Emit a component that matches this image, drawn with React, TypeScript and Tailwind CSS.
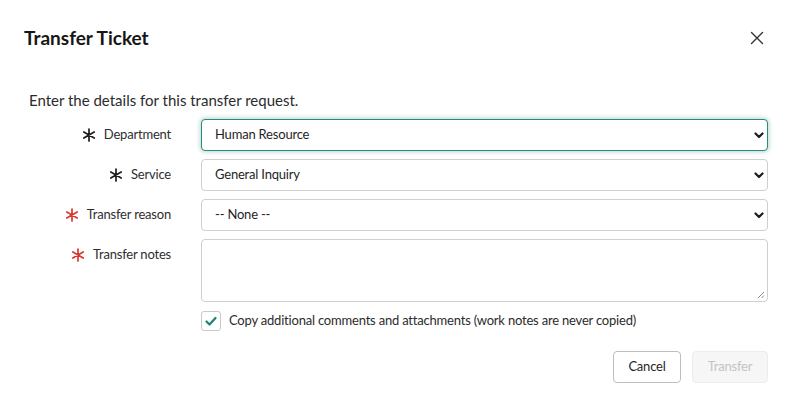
import React from 'react';

const Asterisk: React.FC<{ red?: boolean }> = ({ red }) => (
  <svg className={red ? 'w-[14px] h-[14px] text-[#d7392f]' : 'w-[14px] h-[14px] text-[#1d1d1d]'} viewBox="0 0 14 14" fill="none" stroke="currentColor" strokeWidth={1.7} strokeLinecap="round">
    <path d="M7 1v12M1.8 4l10.4 6M1.8 10l10.4-6" />
  </svg>
);

const Chevron: React.FC = () => (
  <svg className="w-[12px] h-[12px] text-[#1d1d1d]" viewBox="0 0 12 12" fill="none" stroke="currentColor" strokeWidth={2.2} strokeLinecap="round" strokeLinejoin="round">
    <path d="M2.5 4.5L6 8l3.5-3.5" />
  </svg>
);

const Label: React.FC<{ text: string; red?: boolean }> = ({ text, red }) => (
  <div className="h-8 flex items-center justify-end gap-[8px] text-[13px] tracking-[-0.2px] text-[#2e2e2e]">
    <Asterisk red={red} />
    <span>{text}</span>
  </div>
);

const Select: React.FC<{ value: string; focused?: boolean }> = ({ value, focused }) => (
  <div
    className={
      focused
        ? 'relative h-8 rounded-[4px] border border-[#2b8a78] shadow-[0_0_4px_1px_rgba(43,138,120,0.35)] bg-white flex items-center pl-[13px] pr-[2px]'
        : 'relative h-8 rounded-[4px] border border-[#cfcfcf] bg-white flex items-center pl-[13px] pr-[2px]'
    }
  >
    <span className="flex-1 text-[13px] tracking-[-0.2px] text-[#1f1f1f]">{value}</span>
    <Chevron />
  </div>
);

export default function App() {
  return (
    <div className="w-[793px] h-[414px] bg-white" style={{ fontFamily: 'Lato, "Liberation Sans", sans-serif' }}>
      <div className="flex items-center justify-between pl-[24px] pr-[29px] pt-[24px]">
        <h2 className="text-[19px] font-bold text-[#161616] leading-[28px]">Transfer Ticket</h2>
        <svg className="w-[14px] h-[14px] text-[#333]" viewBox="0 0 14 14" fill="none" stroke="currentColor" strokeWidth={1.4} strokeLinecap="round">
          <path d="M1.5 1.5l11 11M12.5 1.5l-11 11" />
        </svg>
      </div>

      <div className="pl-[29px] pr-[25px] pt-[36px]">
        <p className="text-[15px] text-[#2b2b2b] leading-[24px]">Enter the details for this transfer request.</p>

        <div className="mt-[7px] grid grid-cols-[142px_1fr] gap-x-[30px] gap-y-[8px]">
          <Label text="Department" />
          <Select value="Human Resource" focused />
          <Label text="Service" />
          <Select value="General Inquiry" />
          <Label text="Transfer reason" red />
          <Select value="-- None --" />
          <Label text="Transfer notes" red />
          <div className="relative h-[63px] rounded-[4px] border border-[#cfcfcf] bg-white">
            <svg className="absolute right-[2px] bottom-[2px] w-[8px] h-[8px] text-[#8a8a8a]" viewBox="0 0 8 8" stroke="currentColor" strokeWidth={1}>
              <path d="M7 1L1 7M7 4.5L4.5 7" />
            </svg>
          </div>
          <div />
          <div className="flex items-center gap-[8px] mt-[1px]">
            <div className="w-[20px] h-[20px] rounded-[3px] border border-[#c9c9c9] bg-white flex items-center justify-center">
              <svg className="w-[14px] h-[14px] text-[#1f8476]" viewBox="0 0 14 14" fill="none" stroke="currentColor" strokeWidth={2.3} strokeLinecap="round" strokeLinejoin="round">
                <path d="M2.5 7.5l3 3 6-6.5" />
              </svg>
            </div>
            <span className="text-[13px] tracking-[-0.2px] text-[#2b2b2b]">Copy additional comments and attachments (work notes are never copied)</span>
          </div>
        </div>

        <div className="flex justify-end gap-[11px] mt-[20px]">
          <button className="h-[32px] w-[68px] rounded-[4px] border border-[#bdbdbd] bg-white text-[13px] tracking-[-0.2px] text-[#1f1f1f]">Cancel</button>
          <button className="h-[32px] w-[76px] rounded-[4px] border border-[#ececec] bg-[#f6f6f6] text-[13px] tracking-[-0.2px] text-[#c4c4c4]">Transfer</button>
        </div>
      </div>
    </div>
  );
}
